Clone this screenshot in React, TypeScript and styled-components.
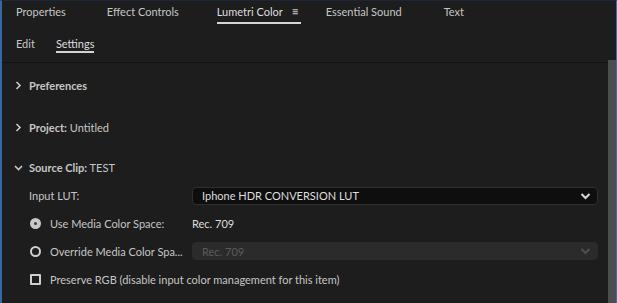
import React from 'react'
import styled, { createGlobalStyle } from 'styled-components';

const GlobalStyle = createGlobalStyle`
  html, body {
    margin: 0;
    padding: 0;
    background: #1d1d1d;
  }
  body {
    font-family: Lato, 'Open Sans', sans-serif;
    font-size: 11px;
    color: #c6c6c6;
  }
`;

const colors = {
  text: '#c6c6c6',
  bright: '#dedede',
  dim: '#5c5c5c',
  line: '#111111',
}

const Frame = styled.div`
  position: relative;
  width: 617px;
  height: 303px;
  box-sizing: border-box;
  border-left: 2px solid #3768a6;
  border-right: 1px solid #3a6db0;
  border-top: 1px solid #1b2738;
  background: #1d1d1d;
  overflow: hidden;
  display: flex;
  flex-direction: column;
`;

const TabBar = styled.div`
  display: flex;
  align-items: flex-start;
  height: 23px;
  padding-left: 14px;
  gap: 41px;
`;

const Tab = styled.div<{ active?: boolean, shift?: number }>`
  display: flex;
  align-items: center;
  gap: 9px;
  height: 21px;
  line-height: 21px;
  margin-left: ${p => p.shift ?? 0}px;
  color: ${p => p.active ? colors.bright : colors.text};
  border-bottom: 2px solid ${p => p.active ? '#d4d4d4' : 'transparent'};
`;

const MenuIcon = styled.span`
  font-size: 12px;
  padding-right: 2px;
  color: ${colors.text};
`;

const SubBar = styled.div`
  display: flex;
  align-items: flex-start;
  height: 38px;
  padding-left: 14px;
  gap: 21px;
  border-bottom: 1px solid ${colors.line};
  margin-right: 9px;
`;

const SubTab = styled.div<{ active?: boolean }>`
  height: 26px;
  line-height: 38px;
  padding-top: 1px;
  color: ${p => p.active ? colors.bright : colors.text};
  position: relative;
  &::after {
    content: '';
    display: ${p => p.active ? 'block' : 'none'};
    position: absolute;
    left: 0;
    right: 0;
    bottom: -2px;
    height: 2px;
    background: #d4d4d4;
  }
`;

const Body = styled.div`
  flex: 1;
  display: flex;
  min-height: 0;
`;

const Content = styled.div`
  flex: 1;
  display: flex;
  flex-direction: column;
  padding-top: 12px;
`;

const Scrollbar = styled.div`
  width: 8px;
  margin-top: -3px;
  background: #4d4d4d;
`;

const Header = styled.div<{ top?: number }>`
  display: flex;
  align-items: center;
  height: 20px;
  margin-top: ${p => p.top ?? 0}px;
  padding-left: 12px;
  gap: 6px;
  color: ${colors.text};
`;

const HeaderTitle = styled.span`
  font-weight: 700;
`;

const Chevron = styled.svg`
  width: 9px;
  height: 9px;
  flex: none;
`;

const Row = styled.div<{ h?: number, top?: number }>`
  display: grid;
  grid-template-columns: 163px 406px;
  align-items: center;
  height: ${p => p.h ?? 28}px;
  margin-top: ${p => p.top ?? 0}px;
  padding-left: 27px;
`;

const LabelCell = styled.div`
  display: flex;
  align-items: center;
  gap: 9px;
  white-space: nowrap;
`;

const Select = styled.div<{ disabled?: boolean }>`
  display: flex;
  align-items: center;
  justify-content: space-between;
  height: 18px;
  box-sizing: border-box;
  padding: 0 6px 0 9px;
  border-radius: 4px;
  background: ${p => p.disabled ? '#2b2b2b' : '#0e0e0e'};
  border: 1px solid ${p => p.disabled ? '#2b2b2b' : '#2e2e2e'};
  color: ${p => p.disabled ? colors.dim : colors.bright};
`;

const Value = styled.div`
  color: ${colors.bright};
`;

const Radio = styled.span<{ checked?: boolean }>`
  display: inline-block;
  width: 11px;
  height: 11px;
  box-sizing: border-box;
  border-radius: 50%;
  margin-left: 1px;
  border: ${p => p.checked ? '4px solid #c8c8c8' : '2px solid #d0d0d0'};
  background: ${p => p.checked ? '#3a3a3a' : '#1d1d1d'};
  flex: none;
`;

const Checkbox = styled.span`
  display: inline-block;
  width: 11px;
  height: 11px;
  box-sizing: border-box;
  margin-left: 1px;
  border: 2px solid #cfcfcf;
  border-radius: 1px;
  flex: none;
`;

const Right = () => (
  <Chevron viewBox="0 0 9 9">
    <polyline points="2.5,1 6,4.5 2.5,8" fill="none" stroke="#c8c8c8" strokeWidth="1.6" />
  </Chevron>
);

const Down = () => (
  <Chevron viewBox="0 0 9 9">
    <polyline points="1,3 4.5,6.5 8,3" fill="none" stroke="#c8c8c8" strokeWidth="1.6" />
  </Chevron>
);

const Caret = ({ color }: { color: string }) => (
  <svg width="11" height="8" viewBox="0 0 11 8">
    <polyline points="1.5,2 5.5,6 9.5,2" fill="none" stroke={color} strokeWidth="2" />
  </svg>
);

export default function App() {
  return (
    <>
      <GlobalStyle />
      <Frame>
        <TabBar>
          <Tab>Properties</Tab>
          <Tab>Effect Controls</Tab>
          <Tab active shift={-3}>Lumetri Color <MenuIcon>≡</MenuIcon></Tab>
          <Tab shift={-16}>Essential Sound</Tab>
          <Tab shift={1}>Text</Tab>
        </TabBar>
        <SubBar>
          <SubTab>Edit</SubTab>
          <SubTab active>Settings</SubTab>
        </SubBar>
        <Body>
          <Content>
            <Header>
              <Right />
              <HeaderTitle>Preferences</HeaderTitle>
            </Header>
            <Header top={22}>
              <Right />
              <span><HeaderTitle>Project:</HeaderTitle> Untitled</span>
            </Header>
            <Header top={20}>
              <Down />
              <span><HeaderTitle>Source Clip:</HeaderTitle> TEST</span>
            </Header>
            <Row h={27} top={5}>
              <LabelCell>Input LUT:</LabelCell>
              <Select>
                <span>Iphone HDR CONVERSION LUT</span>
                <Caret color="#d8d8d8" />
              </Select>
            </Row>
            <Row>
              <LabelCell><Radio checked />Use Media Color Space:</LabelCell>
              <Value>Rec. 709</Value>
            </Row>
            <Row>
              <LabelCell><Radio />Override Media Color Spa...</LabelCell>
              <Select disabled>
                <span>Rec. 709</span>
                <Caret color="#505050" />
              </Select>
            </Row>
            <Row>
              <LabelCell><Checkbox />Preserve RGB (disable input color management for this item)</LabelCell>
            </Row>
          </Content>
          <Scrollbar />
        </Body>
      </Frame>
    </>
  );
}
